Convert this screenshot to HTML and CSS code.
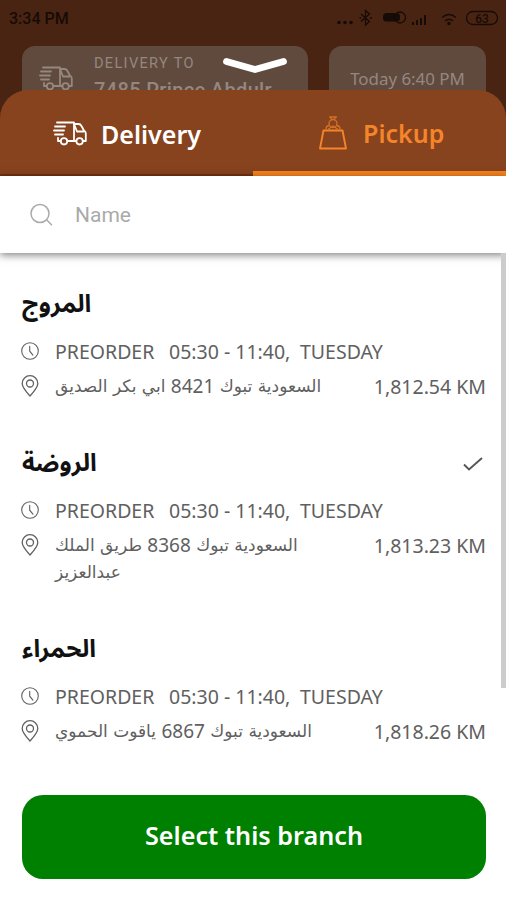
FILE: index.html
```html
<!DOCTYPE html>
<html lang="en">
<head>
<meta charset="utf-8">
<title>Pickup branches</title>
<link rel="stylesheet" href="styles.css">
</head>
<body>
<svg class="defs" width="0" height="0" aria-hidden="true">
  <symbol id="truck" viewBox="0 0 34 25">
    <g fill="none" stroke="currentColor" stroke-width="1.8" stroke-linecap="round" stroke-linejoin="round">
      <path d="M4 1.500H21V20M21 3h4.500q2 0 3 2l2.400 4.500q1.900 1 1.900 3V20h-2.600M23 20h-8M7.500 20H5v-3M21 3l3 7.500h6.500"/>
      <path d="M2 5.500h10M1 9.500h10M2 13.500h8"/>
      <circle cx="11" cy="20.300" r="3.200"/><circle cx="26.600" cy="20.300" r="3.200"/>
    </g>
  </symbol>
  <symbol id="clock" viewBox="0 0 18 18">
    <g fill="none" stroke="currentColor" stroke-width="1.100" stroke-linecap="round"><circle cx="9" cy="9" r="8.300"/><path d="M8.700 4.300V9.200l3.200 4"/></g>
  </symbol>
  <symbol id="pin" viewBox="0 0 18 22">
    <g fill="none" stroke="currentColor" stroke-width="1.300" stroke-linejoin="round"><path d="M9 21Q1.200 12.500 1.200 8.500a7.800 7.800 0 0 1 15.600 0Q16.800 12.500 9 21z"/><circle cx="9" cy="8.500" r="3.500"/></g>
  </symbol>
</svg>
<div class="screen">
  <header class="backdrop">
    <div class="status">
      <span class="time">3:34 PM</span>
      <svg class="indicators" width="164" height="20" viewBox="0 0 164 20">
        <g fill="currentColor"><circle cx="4" cy="13.500" r="1.800"/><circle cx="10" cy="13.500" r="1.800"/><circle cx="16" cy="13.500" r="1.800"/>
        <rect x="48" y="4" width="17" height="8.500" rx="3.500"/>
        <path d="M77 13h2v3h-2zM81 11h2v5h-2zM85 9h2v7h-2zM89 6h2v10h-2z"/><circle cx="114" cy="14.500" r="1.700"/></g>
        <g fill="none" stroke="currentColor" stroke-width="1.300"><path d="M26 5l8.500 7.500-4 3.500V1.500l4 3.500L26 12.500M24.500 9h1.500M35 9h2"/><circle cx="65" cy="8.500" r="5.500"/><path d="M107 8.500q7-6 14 0M110 12q4-3.500 8 0"/><rect x="131.500" y="2.500" width="31" height="13" rx="6.500"/></g>
        <text class="battery" x="147" y="13.500" text-anchor="middle">63</text>
      </svg>
    </div>
    <div class="cards">
      <div class="card destination">
        <svg class="truck"><use href="#truck"/></svg>
        <div class="destination-text"><div class="label">DELIVERY TO</div><div class="street">7485 Prince Abdulr</div></div>
      </div>
      <div class="card slot">Today 6:40 PM</div>
    </div>
    <svg class="handle" width="66" height="18" viewBox="0 0 66 18"><path d="M4.500 5.500L33 13.500L61.500 5.500" fill="none" stroke="#fff" stroke-width="6.800" stroke-linecap="round" stroke-linejoin="round"/></svg>
  </header>
  <main class="sheet">
    <nav class="tabs">
      <div class="tab delivery"><svg class="truck"><use href="#truck"/></svg><span>Delivery</span></div>
      <div class="tab pickup">
        <svg class="bag" width="28" height="36" viewBox="0 0 28 36"><g fill="none" stroke="currentColor" stroke-width="1.900" stroke-linejoin="round" stroke-linecap="round"><path d="M4.500 15.500H23.500L27 33.500H1z"/><g stroke-width="1.300" opacity=".7"><path d="M7 14q0-3 3-3.500M21 14q0-3-3-3.500M10.500 2h7M11.500 2l1 2.500M16.500 2l-1 2.500"/><circle cx="14" cy="8.500" r="4"/><path d="M9.500 14l4.500-3 4.500 3"/></g></g></svg>
        <span>Pickup</span>
      </div>
    </nav>
    <div class="search">
      <svg width="24" height="24" viewBox="0 0 24 24"><g fill="none" stroke="currentColor" stroke-width="1.500" stroke-linecap="round"><circle cx="10" cy="10.500" r="9"/><path d="M16.800 17l4.700 4.700"/></g></svg>
      <span>Name</span>
    </div>
    <div class="list">
      <div class="scrollbar"></div>
      <section class="branch">
        <h2 dir="rtl"><span>المروج</span></h2>
        <div class="hours"><svg class="clock"><use href="#clock"/></svg><span class="state">PREORDER</span><span class="range">05:30 - 11:40,</span><span class="day">TUESDAY</span></div>
        <div class="place"><svg class="pin"><use href="#pin"/></svg><p dir="rtl">السعودية تبوك <b>8421</b> ابي بكر الصديق</p><span class="distance">1,812.54 KM</span></div>
      </section>
      <section class="branch">
        <h2 dir="rtl"><span>الروضة</span><svg width="22" height="16" viewBox="0 0 22 16"><path d="M2 8.500l5 5L20 2" fill="none" stroke="#555" stroke-width="1.900"/></svg></h2>
        <div class="hours"><svg class="clock"><use href="#clock"/></svg><span class="state">PREORDER</span><span class="range">05:30 - 11:40,</span><span class="day">TUESDAY</span></div>
        <div class="place"><svg class="pin"><use href="#pin"/></svg><p dir="rtl">السعودية تبوك <b>8368</b> طريق الملك<br>عبدالعزيز</p><span class="distance">1,813.23 KM</span></div>
      </section>
      <section class="branch">
        <h2 dir="rtl"><span>الحمراء</span></h2>
        <div class="hours"><svg class="clock"><use href="#clock"/></svg><span class="state">PREORDER</span><span class="range">05:30 - 11:40,</span><span class="day">TUESDAY</span></div>
        <div class="place"><svg class="pin"><use href="#pin"/></svg><p dir="rtl">السعودية تبوك <b>6867</b> ياقوت الحموي</p><span class="distance">1,818.26 KM</span></div>
      </section>
    </div>
    <button class="select">Select this branch</button>
  </main>
</div>
</body>
</html>
```
FILE: styles.css
```css
* { box-sizing: border-box; }
body { margin: 0; font-family: "Noto Sans", sans-serif; }
.defs { position: absolute; }
.screen { width: 506px; height: 900px; overflow: hidden; display: flex; flex-direction: column; background: #fff; }
.backdrop { position: relative; height: 120px; flex: none; background: #4a2412; }
.status { height: 46px; padding: 9px 7px 0 9px; display: flex; justify-content: space-between; color: #160b06; }
.time { font: 500 16px/20px Roboto, sans-serif; }
.battery { font: 500 12px Roboto, sans-serif; fill: currentColor; }
.cards { display: flex; justify-content: space-between; padding: 0 20px 0 22px; }
.card { height: 74px; border-radius: 13px; background: #604a3e; color: #96877e; }
.destination { width: 286px; display: flex; padding: 7px 0 0 17px; }
.truck { width: 34px; height: 25px; flex: none; }
.destination .truck { margin-top: 13px; }
.destination-text { margin-left: 21px; white-space: nowrap; }
.label { font: 14.500px/22px Roboto, sans-serif; letter-spacing: 1.350px; }
.street { font: 500 20px/31px Roboto, sans-serif; letter-spacing: .35px; }
.slot { width: 157px; font-size: 16.900px; line-height: 66px; text-align: center; }
.handle { position: absolute; left: 222px; top: 56px; }
.sheet { position: relative; margin-top: -30px; flex: 1; display: flex; flex-direction: column; }
.tabs { height: 86px; flex: none; display: flex; border-radius: 28px 28px 0 0; background: #87421e; font-size: 25px; font-weight: 600; overflow: hidden; }
.tab { display: flex; align-items: center; width: 253px; color: #fff; border-bottom: 2px solid #75300f; padding-top: 3px; }
.delivery { padding-left: 53px; gap: 14px; }
.pickup { padding-left: 66px; gap: 16px; color: #f4852a; border-bottom: 5px solid #f5831f; padding-top: 5px; }
.search { position: relative; height: 77px; flex: none; display: flex; align-items: center; gap: 21px; padding-left: 30px; background: #fff; color: #aaa; font: 21px Roboto, sans-serif; box-shadow: 0 2px 8px rgba(0,0,0,.5); }
.list { position: relative; flex: 1; padding: 32px 20px 0 21px; }
.scrollbar { position: absolute; right: 0; top: 0; width: 5px; height: 435px; background: #ccc; }
.branch { margin-bottom: 44px; color: #606060; font-size: 19.500px; }
h2 { height: 36px; margin: 0 0 16px 1px; display: flex; flex-direction: row-reverse; justify-content: space-between; align-items: center; color: #111; font-family: "Noto Sans", "Noto Sans Arabic", sans-serif; font-size: 24.500px; line-height: 36px; font-weight: 700; }
h2 svg { margin: 3px 2px 0 0; }
.hours { height: 28px; display: flex; align-items: center; white-space: nowrap; }
.clock { width: 18px; height: 18px; margin-right: 16px; flex: none; }
.state { width: 114px; }
.range { width: 131px; }
.place { display: flex; align-items: flex-start; margin-top: 8px; line-height: 27px; }
.pin { width: 18px; height: 22px; margin-top: 2px; flex: none; }
.place p { margin: 0 0 0 16px; text-align: left; white-space: nowrap; font-family: "DejaVu Sans", sans-serif; font-size: 17px; line-height: 27px; }
.place b { position: relative; top: 1px; font-family: "Noto Sans", sans-serif; font-weight: 400; font-size: 19px; line-height: 1; }
.distance { margin-left: auto; }
.select { flex: none; width: 464px; height: 84px; margin: 0 0 21px 22px; border: 0; border-radius: 21px; background: #008000; color: #fff; font: 600 25.200px "Noto Sans", sans-serif; padding: 0 0 4px; }
```
